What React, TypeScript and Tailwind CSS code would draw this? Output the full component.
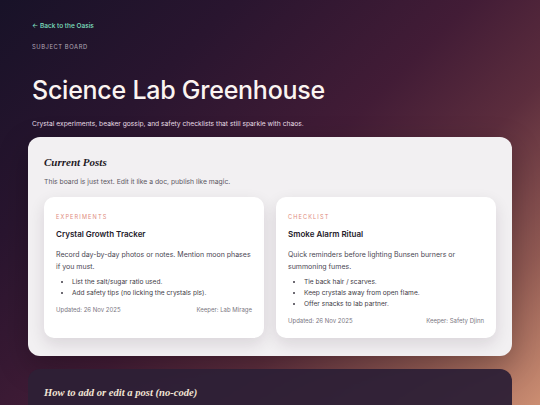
import React from 'react';

type Post = {
  tag: string;
  title: string;
  body: string;
  items: string[];
  updated: string;
  keeper: string;
};

const posts: Post[] = [
  {
    tag: 'Experiments',
    title: 'Crystal Growth Tracker',
    body: 'Record day-by-day photos or notes. Mention moon phases if you must.',
    items: ['List the salt/sugar ratio used.', 'Add safety tips (no licking the crystals pls).'],
    updated: 'Updated: 26 Nov 2025',
    keeper: 'Keeper: Lab Mirage',
  },
  {
    tag: 'Checklist',
    title: 'Smoke Alarm Ritual',
    body: 'Quick reminders before lighting Bunsen burners or summoning fumes.',
    items: ['Tie back hair / scarves.', 'Keep crystals away from open flame.', 'Offer snacks to lab partner.'],
    updated: 'Updated: 26 Nov 2025',
    keeper: 'Keeper: Safety Djinn',
  },
];

const serif = { fontFamily: '"Liberation Serif", "DejaVu Serif", serif' };

const PostCard: React.FC<{ post: Post }> = ({ post }) => (
  <div className="bg-white rounded-[10px] px-3 pt-[16px] pb-3 shadow-[0_6px_16px_rgba(40,20,40,0.12)]">
    <p className="text-[5.6px] uppercase tracking-[0.2em] text-[#e08a7c] leading-[8px]">{post.tag}</p>
    <h3 className="mt-[7px] text-[8px] font-semibold text-[#24202b] leading-[12px]">{post.title}</h3>
    <p className="mt-[9px] text-[7px] text-[#4a4652] leading-[11.5px]">{post.body}</p>
    <ul className="mt-[5px] pl-[16px] list-disc text-[6.6px] text-[#3e3a45] leading-[11px]">
      {post.items.map((item) => (
        <li key={item}>{item}</li>
      ))}
    </ul>
    <div className="mt-[6px] flex justify-between text-[6px] text-[#7b7782] leading-[10px]">
      <span>{post.updated}</span>
      <span>{post.keeper}</span>
    </div>
  </div>
);

export default function App() {
  return (
    <div
      className="min-h-screen bg-fixed bg-[linear-gradient(135deg,#181228_0%,#29152f_25%,#421c36_50%,#5c2d3d_66%,#915a53_84%,#cc8e72_100%)] px-[28px] pt-[21px] pb-10"
      style={{ fontFamily: 'Inter, "Noto Sans", sans-serif' }}
    >
      {/* header */}
      <div className="pl-1">
        <a className="block text-[6.5px] font-medium text-[#7fe0c0] leading-[10px]">← Back to the Oasis</a>
        <p className="mt-[12px] text-[5.8px] uppercase tracking-[0.1em] text-[#b3a8b6] leading-[8px]">Subject Board</p>
        <h1 className="mt-[22px] text-[25px] font-medium text-[#fbf4f1] leading-[34px] tracking-[-0.01em]">
          Science Lab Greenhouse
        </h1>
        <p className="mt-[12px] text-[6.7px] text-[#e6dce4] leading-[10px]">
          Crystal experiments, beaker gossip, and safety checklists that still sparkle with chaos.
        </p>
      </div>

      {/* posts panel */}
      <section className="mt-[8px] rounded-[12px] bg-[#f2f0f2] px-4 pt-[18px] pb-[18px] shadow-[0_10px_30px_rgba(0,0,0,0.25)]">
        <h2 className="text-[11px] font-bold italic text-[#1f1a26] leading-[14px]" style={serif}>
          Current Posts
        </h2>
        <p className="mt-[8px] text-[6.8px] text-[#5c5863] leading-[10px]">
          This board is just text. Edit it like a doc, publish like magic.
        </p>
        <div className="mt-[10px] grid grid-cols-2 gap-3">
          {posts.map((p) => (
            <PostCard key={p.title} post={p} />
          ))}
        </div>
      </section>

      {/* how-to panel */}
      <section className="mt-[13px] rounded-[12px] bg-[#2d2036]/95 px-4 pt-[17px] pb-12">
        <h2 className="text-[10.6px] font-bold italic text-[#f1e4d4] leading-[14px]" style={serif}>
          How to add or edit a post (no-code)
        </h2>
      </section>
    </div>
  );
}
